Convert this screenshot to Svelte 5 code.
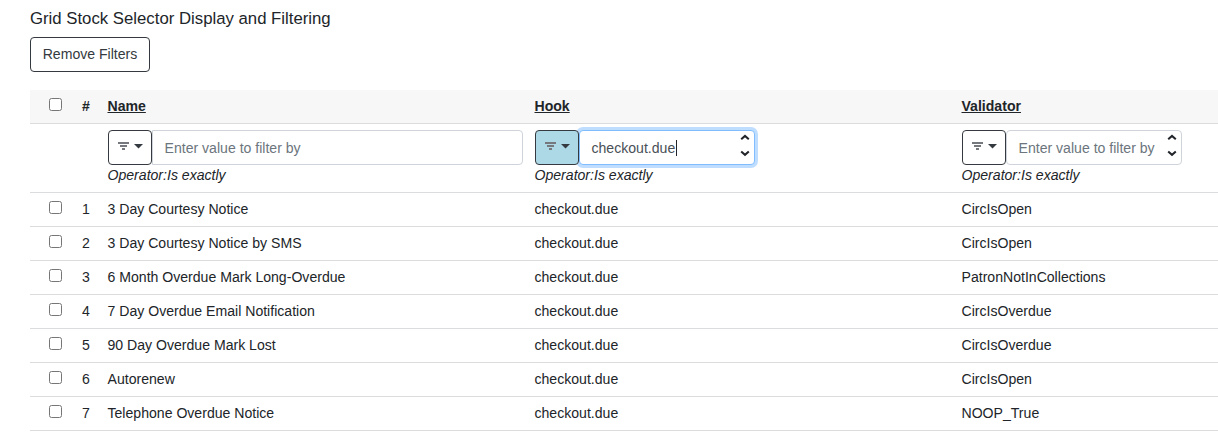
<script>
  const columns = [
    { label: 'Name', kind: 'wide', value: '' },
    { label: 'Hook', kind: 'stepper', value: 'checkout.due', active: true },
    { label: 'Validator', kind: 'stepper', value: '' }
  ];
  const rows = [
    ['3 Day Courtesy Notice', 'checkout.due', 'CircIsOpen'],
    ['3 Day Courtesy Notice by SMS', 'checkout.due', 'CircIsOpen'],
    ['6 Month Overdue Mark Long-Overdue', 'checkout.due', 'PatronNotInCollections'],
    ['7 Day Overdue Email Notification', 'checkout.due', 'CircIsOverdue'],
    ['90 Day Overdue Mark Lost', 'checkout.due', 'CircIsOverdue'],
    ['Autorenew', 'checkout.due', 'CircIsOpen'],
    ['Telephone Overdue Notice', 'checkout.due', 'NOOP_True']
  ];
</script>

<main>
  <h1>Grid Stock Selector Display and Filtering</h1>
  <button class="remove">Remove Filters</button>

  <div class="grid">
    <div class="row head">
      <div class="check"><input type="checkbox" aria-label="Select all" /></div>
      <div class="num">#</div>
      {#each columns as col}
        <div class="cell"><span class="sort">{col.label}</span></div>
      {/each}
    </div>

    <div class="row filters">
      <div class="check"></div>
      <div class="num"></div>
      {#each columns as col}
        <div class="cell">
          <div class="group {col.kind}">
            <button class="op" class:active={col.active} aria-label="Filter operator">
              <svg class="lines" width="11" height="8" viewBox="0 0 11 8">
                <path d="M0 1h11M2 4h7M4 7h3" stroke="currentColor" stroke-width="2" fill="none" />
              </svg>
              <svg width="9" height="5" viewBox="0 0 9 5"><path d="M0 0h9L4.5 4.6z" fill="currentColor" /></svg>
            </button>
            <div class="field" class:focused={col.active}>
              {#if col.value}
                <span class="value">{col.value}</span><span class="caret"></span>
              {:else}
                <span class="placeholder">Enter value to filter by</span>
              {/if}
              {#if col.kind === 'stepper'}
                <svg class="arrows" width="10" height="23" viewBox="0 0 10 23">
                  <path d="M1.2 5.3 5 1.9l3.8 3.4M1.2 17.4 5 20.8l3.8-3.4" stroke="currentColor" stroke-width="2" fill="none" />
                </svg>
              {/if}
            </div>
          </div>
          <div class="operator">Operator:Is exactly</div>
        </div>
      {/each}
    </div>

    {#each rows as row, i}
      <div class="row">
        <div class="check"><input type="checkbox" aria-label="Select row" /></div>
        <div class="num">{i + 1}</div>
        {#each row as value}
          <div class="cell">{value}</div>
        {/each}
      </div>
    {/each}
  </div>
</main>

<style>
  :global(body) {
    background: #fff;
  }
  main {
    padding: 9px 0 0 30px;
    font: 14.08px/21px "Liberation Sans", Arial, sans-serif;
    color: #212529;
  }
  h1 {
    margin: 0;
    font-size: 16.75px;
    line-height: 20px;
    font-weight: 400;
  }
  button {
    font: inherit;
    background: #fff;
    border: 1px solid #343a40;
    border-radius: 4px;
    color: #343a40;
    box-sizing: border-box;
  }
  .remove {
    display: block;
    width: 120px;
    height: 35px;
    margin: 8px 0 18px;
    padding: 0;
  }
  .row {
    display: grid;
    grid-template-columns: 47px 30.5px 427px 427px minmax(0, 1fr);
    height: 34px;
    box-sizing: border-box;
    border-bottom: 1px solid #dbdcdd;
    line-height: 33px;
  }
  .head {
    background: #f7f7f7;
    font-weight: 700;
  }
  .sort {
    text-decoration: underline;
  }
  .filters {
    height: 69px;
    line-height: 21px;
  }
  .check {
    padding-left: 19px;
    display: flex;
    align-items: flex-start;
  }
  input {
    margin: 8px 0 0;
    width: 13px;
    height: 13px;
  }
  .num {
    padding-left: 5px;
  }
  .group {
    display: flex;
    margin-top: 6px;
    height: 35px;
  }
  .wide {
    width: 415.5px;
  }
  .stepper {
    width: 220.5px;
  }
  .op {
    width: 44.5px;
    flex: none;
    padding: 0 0 3px 1px;
    display: flex;
    align-items: center;
    justify-content: center;
    gap: 5px;
    position: relative;
    z-index: 1;
  }
  .lines {
    color: #75797d;
  }
  .op.active {
    background: #add8e6;
  }
  .field {
    flex: 1;
    margin-left: -0.5px;
    border: 1px solid #ced4da;
    border-radius: 0 4px 4px 0;
    background: #fff;
    box-sizing: border-box;
    padding: 0 4px 0 12px;
    display: flex;
    align-items: center;
    color: #495057;
  }
  .stepper .field {
    border-radius: 4px;
  }
  .focused {
    border-color: #80bdff;
    box-shadow: 0 0 0 3px #bfdeff;
  }
  .value,
  .placeholder {
    padding-top: 2px;
  }
  .placeholder {
    color: #6c757d;
  }
  .caret {
    width: 1px;
    height: 16px;
    margin-left: 0.5px;
    background: #212529;
  }
  .arrows {
    margin: 0 0 4px auto;
    color: #212529;
  }
  .operator {
    font-style: italic;
  }
</style>
